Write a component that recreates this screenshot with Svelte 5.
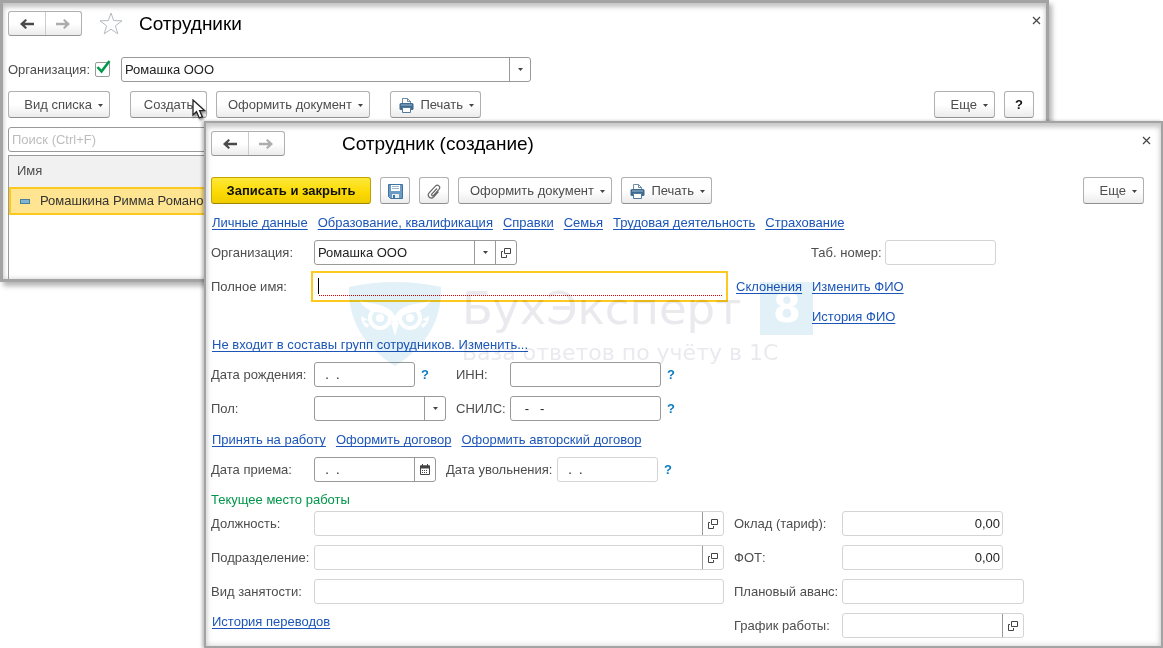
<script lang="ts">
	const sections = ['Личные данные', 'Образование, квалификация', 'Справки', 'Семья', 'Трудовая деятельность', 'Страхование'];
	const actions = ['Принять на работу', 'Оформить договор', 'Оформить авторский договор'];

	let filterByOrg = $state(true);
	let search = $state('');
	let fullName = $state('');
	let birthDate = $state('  .  .');
	let hireDate = $state('  .  .');
	let inn = $state('');
	let snils = $state('   -   -');
</script>

{#snippet arrows()}
	<div class="nav">
		<button type="button" aria-label="Назад">
			<svg width="14" height="10" viewBox="0 0 14 10"><path d="M0 5 5.500 0 7 1.200 4.700 3.700H14v2.600H4.700L7 8.800 5.500 10z" fill="#4a4a4a" /></svg>
		</button>
		<button type="button" aria-label="Вперед">
			<svg width="14" height="10" viewBox="0 0 14 10"><path d="M14 5 8.500 0 7 1.200l2.300 2.500H0v2.600h9.300L7 8.800 8.500 10z" fill="#adadad" /></svg>
		</button>
	</div>
{/snippet}

{#snippet close()}
	<button class="close" type="button" aria-label="Закрыть">
		<svg width="9" height="9" viewBox="0 0 9 9"><path d="m1 1 7 7M8 1 1 8" stroke="#444" stroke-width="1.2" /></svg>
	</button>
{/snippet}

{#snippet caret()}
	<svg class="caret" width="5" height="3" viewBox="0 0 5 3"><path d="M0 0h5L2.500 3z" fill="#444" /></svg>
{/snippet}

{#snippet printer()}
	<svg width="15" height="15" viewBox="0 0 15 15">
		<path d="M3.500 6V.5h5l3 3V6" fill="#fff" stroke="#6d8ba3" />
		<path d="M8.500.5v3h3" fill="none" stroke="#6d8ba3" />
		<rect x=".5" y="5" width="14" height="7" rx="1.500" fill="#3d6a8e" />
		<path d="M2 7h11" stroke="#9dbad0" />
		<path d="M3.500 9.500h8v5h-8z" fill="#fff" stroke="#54799a" />
	</svg>
{/snippet}

{#snippet openIcon()}
	<svg width="10" height="10" viewBox="0 0 10 10" fill="none" stroke="#444">
		<path d="M3.500.5h6v5h-6zM2 3.500H.5v6h5V7" />
	</svg>
{/snippet}

<div class="desktop">
	<section class="window list">
		<header class="titlebar">
			{@render arrows()}
			<button class="star" type="button" aria-label="В избранное">
				<svg width="24" height="23" viewBox="0 0 24 23">
					<path d="m12 1 2.700 7.600 8.300.2-6.600 5 2.400 8L12 17.200 5.200 21.800l2.400-8L1 8.800l8.300-.2z" fill="#fff" stroke="#b4bac2" />
				</svg>
			</button>
			<h1>Сотрудники</h1>
			{@render close()}
		</header>

		<div class="filter">
			<label for="use-org">Организация:</label>
			<span class="tick">
				<input id="use-org" type="checkbox" bind:checked={filterByOrg} />
				{#if filterByOrg}
					<svg width="15" height="14" viewBox="0 0 15 14"><path d="m1.500 7 4 4.500L13.500 1" fill="none" stroke="#009a4a" stroke-width="2.600" /></svg>
				{/if}
			</span>
			<span class="field combo org">
				<select aria-label="Организация"><option>Ромашка ООО</option></select>
				<span class="cap">{@render caret()}</span>
			</span>
		</div>

		<div class="toolbar">
			<button class="btn menu view" type="button">Вид списка {@render caret()}</button>
			<button class="btn create" type="button">Создать</button>
			<button class="btn menu document" type="button">Оформить документ {@render caret()}</button>
			<button class="btn menu print" type="button">{@render printer()} Печать {@render caret()}</button>
			<button class="btn menu more" type="button">Еще {@render caret()}</button>
			<button class="btn square help-btn" type="button">?</button>
		</div>

		<input class="field search" type="text" placeholder="Поиск (Ctrl+F)" aria-label="Поиск" bind:value={search} />

		<table>
			<thead>
				<tr><th>Имя</th></tr>
			</thead>
			<tbody>
				<tr><td><i class="mark"></i>Ромашкина Римма Романовна</td></tr>
			</tbody>
		</table>
		<svg class="pointer" width="14" height="21" viewBox="0 0 14 21">
			<path d="M1 1v15l3.500-3.300L7.300 19l3-1.300L7.600 11.600h4.900z" fill="#fff" stroke="#222" stroke-width="1.300" />
		</svg>
	</section>

	<section class="window card">
		<header class="titlebar">
			{@render arrows()}
			<h1>Сотрудник (создание)</h1>
			{@render close()}
		</header>

		<div class="toolbar">
			<button class="btn primary" type="button">Записать и закрыть</button>
			<button class="btn square" type="button" aria-label="Записать">
				<svg width="15" height="15" viewBox="0 0 15 15">
					<path d="M.5.5h14v14h-12l-2-2z" fill="#6b9ac4" stroke="#42739f" />
					<path d="M3 1h9v6H3z" fill="#fff" />
					<path d="M4 2.500h7M4 4.500h7" stroke="#9ab3c9" />
					<path d="M4 10h7v4H4z" fill="#e6edf3" />
					<path d="M5 11h2v3H5z" fill="#42739f" />
				</svg>
			</button>
			<button class="btn square" type="button" aria-label="Прикрепить файл">
				<svg width="14" height="15" viewBox="0 0 14 15" fill="none" stroke="#666" stroke-width="1.200">
					<path d="m10 4.500-5 5.400c-1 1.200.6 2.600 1.600 1.500l5.400-6c2.200-2.600-1.300-5.700-3.600-3.300L2.300 8.700c-3 3.400 1.500 7.300 4.500 4.100l4.700-5.200" />
				</svg>
			</button>
			<button class="btn menu document" type="button">Оформить документ {@render caret()}</button>
			<button class="btn menu print" type="button">{@render printer()} Печать {@render caret()}</button>
			<button class="btn menu more" type="button">Еще {@render caret()}</button>
		</div>

		<nav class="links">
			{#each sections as name}
				<a href="#section">{name}</a>
			{/each}
		</nav>

		<div class="head">
			<label for="org">Организация:</label>
			<span class="field combo with-open">
				<select id="org"><option>Ромашка ООО</option></select>
				<span class="cap">{@render caret()}</span>
				<button type="button" aria-label="Открыть организацию">{@render openIcon()}</button>
			</span>
			<div class="number">
				<label for="number">Таб. номер:</label>
				<input id="number" class="field pale" type="text" />
			</div>

			<label for="full-name">Полное имя:</label>
			<span class="full-name">
				<i class="cursor"></i>
				<input id="full-name" type="text" bind:value={fullName} />
			</span>
			<div><a href="#declension">Склонения</a></div>
			<div><a href="#rename">Изменить ФИО</a></div>
			<div class="history"><a href="#history">История ФИО</a></div>
		</div>

		<div class="links"><a href="#groups">Не входит в составы групп сотрудников. Изменить...</a></div>

		<div class="personal">
			<label for="birth">Дата рождения:</label>
			<span class="hinted">
				<input id="birth" class="field date" type="text" bind:value={birthDate} />
				<button class="hint" type="button">?</button>
			</span>
			<label for="inn">ИНН:</label>
			<span class="hinted">
				<input id="inn" class="field code" type="text" bind:value={inn} />
				<button class="hint" type="button">?</button>
			</span>

			<label for="gender">Пол:</label>
			<span class="field combo">
				<select id="gender"><option></option><option>Мужской</option><option>Женский</option></select>
				<span class="cap">{@render caret()}</span>
			</span>
			<label for="snils">СНИЛС:</label>
			<span class="hinted">
				<input id="snils" class="field code" type="text" bind:value={snils} />
				<button class="hint" type="button">?</button>
			</span>
		</div>

		<div class="links">
			{#each actions as name}
				<a href="#action">{name}</a>
			{/each}
		</div>

		<div class="dates">
			<label for="hired">Дата приема:</label>
			<span class="field picker">
				<input id="hired" type="text" bind:value={hireDate} />
				<button type="button" aria-label="Выбрать дату">
					<svg width="10" height="11" viewBox="0 0 10 11">
						<path d="M.5 2v8.500h9V2z" fill="#fff" stroke="#444" />
						<path d="M0 1.500h10v3H0zM2 0h1v2H2zM7 0h1v2H7z" fill="#444" />
						<path d="M2 6.500h6M2 8.500h6" stroke="#444" stroke-dasharray="1 1" />
					</svg>
				</button>
			</span>
			<label for="fired">Дата увольнения:</label>
			<span class="hinted">
				<input id="fired" class="field pale date" type="text" value="  .  ." readonly />
				<button class="hint" type="button">?</button>
			</span>
		</div>

		<h2>Текущее место работы</h2>

		<div class="job">
			<div class="place">
				<label for="position">Должность:</label>
				<span class="field pale picker">
					<input id="position" type="text" />
					<button type="button" aria-label="Открыть должность">{@render openIcon()}</button>
				</span>
				<label for="department">Подразделение:</label>
				<span class="field pale picker">
					<input id="department" type="text" />
					<button type="button" aria-label="Открыть подразделение">{@render openIcon()}</button>
				</span>
				<label for="employment">Вид занятости:</label>
				<input id="employment" class="field pale" type="text" />
				<div class="links wide"><a href="#transfers">История переводов</a></div>
			</div>
			<div class="pay">
				<label for="salary">Оклад (тариф):</label>
				<input id="salary" class="field pale sum" type="text" value="0,00" readonly />
				<label for="fund">ФОТ:</label>
				<input id="fund" class="field pale sum" type="text" value="0,00" readonly />
				<label for="advance">Плановый аванс:</label>
				<input id="advance" class="field pale" type="text" />
				<label for="schedule">График работы:</label>
				<span class="field pale picker">
					<input id="schedule" type="text" />
					<button type="button" aria-label="Открыть график">{@render openIcon()}</button>
				</span>
			</div>
		</div>

		<div class="watermark" aria-hidden="true">
			<svg width="92" height="84" viewBox="0 0 92 84">
				<path d="M0 5Q46-5 92 5C93 30 84 60 46 84 8 60-1 30 0 5z" fill="#c6e2f1" />
				<path d="M10 18c5 9 11 11 22 13 8 2 12 8 14 13 2-5 6-11 14-13 11-2 17-4 22-13-9 4-18 3-26 7-5 2-8 5-10 9-2-4-5-7-10-9-8-4-17-3-26-7z" fill="#fff" />
				<g fill="none" stroke="#fff" stroke-width="4">
					<circle cx="31" cy="36" r="10" />
					<circle cx="61" cy="36" r="10" />
				</g>
				<circle cx="31" cy="36" r="4" fill="#fff" />
				<circle cx="61" cy="36" r="4" fill="#fff" />
				<path d="m42 41 4 13 4-13-4-3zM12 34l7 4-5 1 6 4-2 3C14 43 12 39 12 34zM80 34l-7 4 5 1-6 4 2 3c4-3 6-7 6-12z" fill="#fff" />
			</svg>
			<div class="brand">
				<div class="name">БухЭксперт<b>8</b></div>
				<div class="slogan">База ответов по учёту в 1С</div>
			</div>
		</div>
	</section>
</div>

<style>
	:global(body) {
		background: #fff;
	}
	.desktop {
		display: grid;
		align-items: start;
		min-height: 100vh;
		overflow: hidden;
		font: 13px/18px 'Liberation Sans', Arial, sans-serif;
		color: #4d4d4d;
	}
	.desktop :global(*) {
		box-sizing: border-box;
	}
	.window {
		grid-area: 1 / 1;
		position: relative;
		min-width: 0;
		background: #fff;
	}
	.list {
		margin-right: 114px;
		padding: 8px 12px 0 5px;
		border: 3px solid #a3a3a3;
		box-shadow:
			3px 4px 5px rgba(0, 0, 0, 0.3),
			inset 0 5px 5px -1px #c4c4c4,
			inset 0 0 5px #ccc;
	}
	.card {
		margin: 121px 0 0 204px;
		padding: 8px 17px 8px 5px;
		border: 2px solid #a3a3a3;
		box-shadow:
			-2px 0 3px rgba(0, 0, 0, 0.25),
			inset 0 5px 5px -1px #c8c8c8,
			inset 0 0 6px #ccc;
	}

	button,
	input,
	select {
		margin: 0;
		padding: 0;
		font: inherit;
		color: inherit;
		background: none;
		border: 0;
		border-radius: 0;
		outline: none;
	}
	svg {
		flex: none;
	}
	h1,
	h2 {
		margin: 0;
		font-weight: normal;
	}
	a {
		color: #1c56b8;
		text-decoration: underline 1px;
		text-underline-offset: 2px;
		text-decoration-skip-ink: none;
	}

	.titlebar {
		display: flex;
		align-items: center;
		height: 25px;
	}
	.titlebar h1 {
		font-size: 19px;
		line-height: 26px;
		color: #000;
	}
	.nav {
		display: flex;
		width: 74px;
		height: 25px;
		border: 1px solid #b0b0b0;
		border-bottom-color: #959595;
		border-radius: 3px;
		background: linear-gradient(#fff 50%, #ececec);
	}
	.nav button {
		display: grid;
		place-items: center;
		flex: 1;
	}
	.nav button + button {
		border-left: 1px solid #ccc;
	}
	.star {
		width: 24px;
		height: 23px;
		margin: 0 16px 0 17px;
	}
	.close {
		align-self: flex-start;
		margin: 0 -7px 0 auto;
		height: 20px;
	}
	.card .titlebar h1 {
		margin-left: 57px;
	}

	.filter {
		display: flex;
		align-items: center;
		margin-top: 21px;
	}
	.filter label {
		width: 82px;
	}
	.tick {
		position: relative;
		width: 15px;
		height: 15px;
		margin: 0 11px 0 5px;
	}
	.tick input {
		display: block;
		appearance: none;
		width: 15px;
		height: 15px;
		border: 1px solid #999;
		border-radius: 2px;
	}
	.tick svg {
		position: absolute;
		left: 1px;
		top: -2px;
		pointer-events: none;
	}

	.field {
		height: 25px;
		min-width: 0;
		border: 1px solid #999;
		border-radius: 3px;
		color: #222;
		background: #fff;
	}
	input.field {
		padding: 0 3px;
	}
	.field.pale {
		border-color: #d4d4d4;
	}
	.combo {
		display: grid;
		grid-template-columns: 1fr 21px;
	}
	.combo.with-open {
		grid-template-columns: 1fr 21px 21px;
		width: 203px;
	}
	.combo select {
		grid-area: 1 / 1 / 2 / 3;
		appearance: none;
		padding: 0 24px 0 3px;
		min-width: 0;
	}
	.combo .cap {
		grid-area: 1 / 2;
		display: grid;
		place-items: center;
		border-left: 1px solid #999;
		pointer-events: none;
	}
	.combo button,
	.picker button {
		display: grid;
		place-items: center;
		border-left: 1px solid #999;
	}
	.org {
		width: 410px;
	}
	.picker {
		display: grid;
		grid-template-columns: 1fr 21px;
	}
	.picker input {
		min-width: 0;
		padding: 0 3px;
	}

	.toolbar {
		display: flex;
		gap: 9px;
	}
	.list .toolbar {
		margin-top: 9px;
	}
	.card .toolbar {
		margin-top: 21px;
	}
	.btn {
		display: flex;
		align-items: center;
		justify-content: center;
		height: 27px;
		padding: 1px 0 0;
		border: 1px solid #b0b0b0;
		border-bottom-color: #8f8f8f;
		border-radius: 3px;
		background: linear-gradient(#fff 50%, #ececec);
		white-space: nowrap;
	}
	.menu {
		justify-content: flex-end;
		padding-right: 6px;
		gap: 6px;
	}
	.view {
		width: 102px;
	}
	.document {
		width: 154px;
	}
	.print {
		width: 91px;
	}
	.square {
		width: 30px;
	}
	.create {
		width: 77px;
		margin-left: 11px;
	}
	.list .print {
		margin-left: 11px;
	}
	.more {
		width: 61px;
		margin-left: auto;
	}
	.help-btn {
		font-weight: bold;
		color: #111;
	}
	.primary {
		width: 160px;
		border-color: #c2a400;
		border-bottom-color: #a08500;
		background: linear-gradient(#ffe93a, #fbd900 60%, #f0cc00);
		color: #111;
		font-weight: bold;
	}

	.search {
		display: block;
		width: 100%;
		margin-top: 9px;
	}
	.search::placeholder {
		color: #bdbdbd;
	}
	table {
		display: block;
		width: 100%;
		height: 124px;
		margin-top: 3px;
		border: 1px solid #999;
		border-bottom: 0;
	}
	thead,
	tbody,
	tr,
	th,
	td {
		display: block;
	}
	th {
		height: 31px;
		padding: 0 8px;
		font-weight: normal;
		line-height: 30px;
		text-align: left;
		background: #f1f1f1;
	}
	td {
		display: flex;
		align-items: center;
		gap: 10px;
		height: 28px;
		padding: 0 9px;
		border: 2px solid #fcca1e;
		background: #ffe591;
		color: #333;
	}
	.mark {
		width: 10px;
		height: 5px;
		border: 1px solid #4c7f96;
		background: #7fb4d4;
	}
	.pointer {
		position: absolute;
		left: 189px;
		top: 96px;
		filter: drop-shadow(1px 2px 1px rgba(0, 0, 0, 0.4));
		pointer-events: none;
	}

	.links {
		display: flex;
		gap: 10px;
		margin: 10px 0 8px;
		padding-left: 1px;
		white-space: nowrap;
	}
	.head {
		display: grid;
		grid-template-columns: 103px 422px 76px 1fr;
		align-items: center;
		row-gap: 6px;
	}
	.number {
		grid-column: 3 / 5;
		display: flex;
		align-items: center;
		padding-left: 75px;
	}
	.number label {
		width: 74px;
	}
	.number .field {
		width: 111px;
	}
	.full-name {
		display: flex;
		align-items: center;
		width: 417px;
		height: 31px;
		margin-left: -3px;
		padding: 0 4px 2px 5px;
		border: 2px solid #fcca1e;
	}
	.full-name input {
		flex: 1;
		height: 20px;
		border-bottom: 1px dotted #e00000;
	}
	.cursor {
		width: 1px;
		height: 16px;
		background: #000;
	}
	.history {
		grid-column: 4;
	}
	.personal {
		display: grid;
		grid-template-columns: 103px 132px 64px 1fr;
		align-items: center;
		row-gap: 9px;
	}
	.personal label:nth-of-type(even),
	.dates label:nth-of-type(even) {
		padding-left: 10px;
	}
	.hinted {
		display: flex;
		align-items: center;
		gap: 6px;
	}
	.hint {
		color: #0d7cc4;
		font-weight: bold;
	}
	.date {
		width: 101px;
	}
	.code {
		width: 151px;
	}
	.dates {
		display: grid;
		grid-template-columns: 103px 122px 121px 1fr;
		align-items: center;
	}
	h2 {
		margin: 9px 0 2px;
		font-size: 13px;
		color: #00964a;
	}
	.job {
		display: flex;
		align-items: flex-start;
		gap: 10px;
	}
	.place,
	.pay {
		display: grid;
		align-items: center;
		row-gap: 9px;
	}
	.place {
		grid-template-columns: 103px 410px;
	}
	.pay {
		grid-template-columns: 108px 182px;
	}
	.wide {
		grid-column: 1 / 3;
		margin: 0;
	}
	.pay .sum {
		width: 161px;
		padding-right: 2px;
		text-align: right;
	}

	.watermark {
		position: absolute;
		left: 143px;
		top: 159px;
		display: flex;
		gap: 21px;
		opacity: 0.5;
		mix-blend-mode: multiply;
		pointer-events: none;
		font-family: 'DejaVu Sans', sans-serif;
		color: #d4d4de;
		white-space: nowrap;
	}
	.name {
		display: flex;
		align-items: center;
		gap: 19px;
		font-size: 45px;
		line-height: 53px;
	}
	.name b {
		width: 53px;
		background: #c6e2f1;
		color: #fff;
		font-size: 40px;
		text-align: center;
	}
	.slogan {
		margin-top: 5px;
		font-size: 22px;
		line-height: 26px;
	}
</style>
